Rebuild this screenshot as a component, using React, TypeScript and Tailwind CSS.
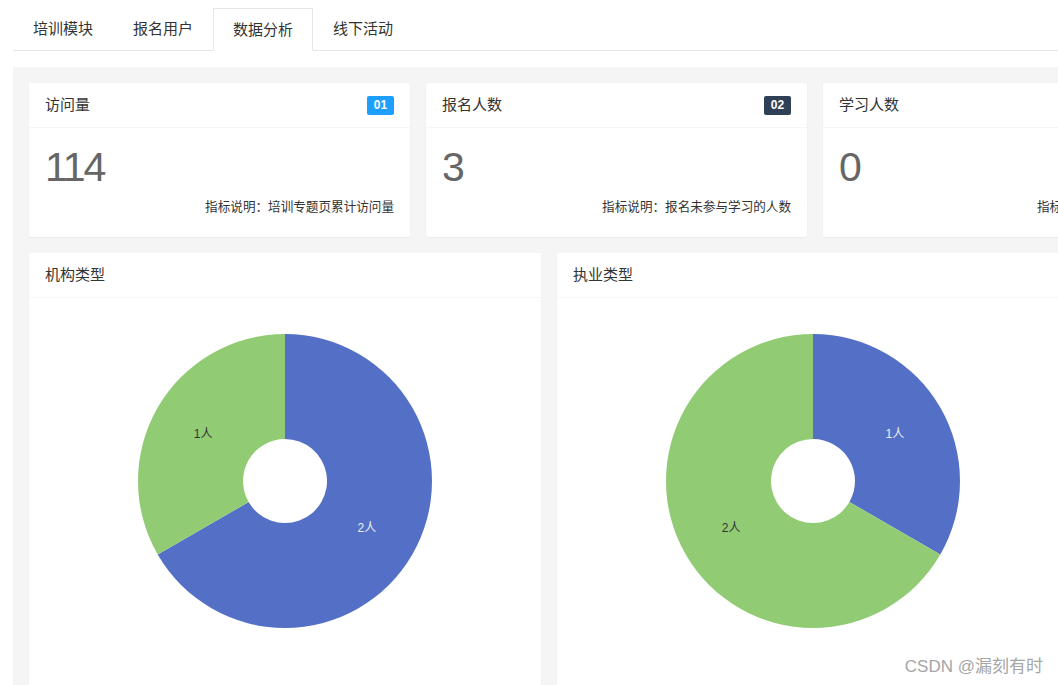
import React from 'react'

interface Slice {
    value: number
    color: string
    labelColor: string
}

interface StatCardProps {
    title: string
    badge: string
    badgeClass: string
    value: string
    note: string
}

const tabs = ['培训模块', '报名用户', '数据分析', '线下活动']

const stats: StatCardProps[] = [
    {
        title: '访问量',
        badge: '01',
        badgeClass: 'bg-[#1e9fff]',
        value: '114',
        note: '指标说明：培训专题页累计访问量',
    },
    {
        title: '报名人数',
        badge: '02',
        badgeClass: 'bg-[#2f4056]',
        value: '3',
        note: '指标说明：报名未参与学习的人数',
    },
    {
        title: '学习人数',
        badge: '03',
        badgeClass: 'bg-[#009688]',
        value: '0',
        note: '指标说明：参与学习的人数',
    },
    {
        title: '完成人数',
        badge: '04',
        badgeClass: 'bg-[#ffb800]',
        value: '0',
        note: '指标说明：完成全部课程的人数',
    },
]

const BLUE = '#5470c6'
const GREEN = '#91cc75'

// point on circle, angle measured clockwise from 12 o'clock
const pt = (cx: number, cy: number, r: number, deg: number) => {
    const a = (deg * Math.PI) / 180
    return [cx + r * Math.sin(a), cy - r * Math.cos(a)]
}

const Donut: React.FC<{ data: Slice[] }> = ({ data }) => {
    const cx = 256
    const cy = 183
    const R = 147
    const r0 = 42
    const total = data.reduce((s, d) => s + d.value, 0)

    let start = 0
    const parts = data.map((d, i) => {
        const sweep = (d.value / total) * 360
        const end = start + sweep
        const large = sweep > 180 ? 1 : 0
        const [ox1, oy1] = pt(cx, cy, R, start)
        const [ox2, oy2] = pt(cx, cy, R, end)
        const [ix1, iy1] = pt(cx, cy, r0, start)
        const [ix2, iy2] = pt(cx, cy, r0, end)
        const path = `M${ox1} ${oy1} A${R} ${R} 0 ${large} 1 ${ox2} ${oy2} L${ix2} ${iy2} A${r0} ${r0} 0 ${large} 0 ${ix1} ${iy1} Z`
        const [lx, ly] = pt(cx, cy, (R + r0) / 2, start + sweep / 2)
        start = end
        return (
            <g key={i}>
                <path d={path} fill={d.color} />
                <text
                    x={lx}
                    y={ly}
                    fill={d.labelColor}
                    fontSize="12"
                    textAnchor="middle"
                    dominantBaseline="central"
                    fontFamily="'Liberation Sans', 'Noto Sans CJK SC', sans-serif"
                >
                    {d.value}人
                </text>
            </g>
        )
    })

    return (
        <svg width="512" height="400" viewBox="0 0 512 400">
            {parts}
        </svg>
    )
}

const StatCard: React.FC<StatCardProps> = ({ title, badge, badgeClass, value, note }) => (
    <div className="w-[381px] shrink-0 bg-white rounded-[2px] shadow-[0_1px_2px_0_rgba(0,0,0,0.05)]">
        <div className="h-[45px] px-4 flex items-center justify-between border-b border-[#f6f6f6]">
            <span className="text-[15px] text-[#333]">{title}</span>
            <span
                className={`${badgeClass} h-[19px] px-[5px] min-w-[27px] text-center rounded-[2px] text-white text-[12px] font-bold leading-[19px]`}
            >
                {badge}
            </span>
        </div>
        <div className="px-4 pt-[18px] pb-[21px]">
            <div className="text-[41px] leading-[42px] tracking-[-2px] text-[#666]">{value}</div>
            <div className="mt-[10px] text-right text-[12.6px] leading-[18px] text-[#333] whitespace-nowrap">
                {note}
            </div>
        </div>
    </div>
)

const ChartCard: React.FC<{ title: string; data: Slice[] }> = ({ title, data }) => (
    <div className="w-[512px] shrink-0 bg-white rounded-[2px] shadow-[0_1px_2px_0_rgba(0,0,0,0.05)]">
        <div className="h-[45px] px-4 flex items-center border-b border-[#f6f6f6]">
            <span className="text-[15px] text-[#333]">{title}</span>
        </div>
        <Donut data={data} />
    </div>
)

export default function App() {
    return (
        <div
            className="relative w-[1058px] h-[685px] overflow-hidden bg-white pl-[13px] pt-[8px]"
            style={{ fontFamily: "'Liberation Sans', 'Noto Sans CJK SC', sans-serif" }}
        >
            {/* Tabs */}
            <ul className="flex items-start h-[43px] border-b border-[#e6e6e6]">
                {tabs.map((t, i) => (
                    <li
                        key={t}
                        className={
                            i === 2
                                ? 'relative w-[100px] h-[43px] border border-[#e6e6e6] border-b-white bg-white text-center text-[15px] leading-[41px] text-[#333]'
                                : 'w-[100px] h-[42px] text-center text-[15px] leading-[42px] text-[#333]'
                        }
                    >
                        {t}
                    </li>
                ))}
            </ul>

            {/* Panel */}
            <div className="mt-4 bg-[#f5f5f5] p-4 h-[700px]">
                <div className="flex gap-4">
                    {stats.map((s) => (
                        <StatCard key={s.title} {...s} />
                    ))}
                </div>
                <div className="flex gap-4 mt-4">
                    <ChartCard
                        title="机构类型"
                        data={[
                            { value: 2, color: BLUE, labelColor: '#eeeeee' },
                            { value: 1, color: GREEN, labelColor: '#333333' },
                        ]}
                    />
                    <ChartCard
                        title="执业类型"
                        data={[
                            { value: 1, color: BLUE, labelColor: '#eeeeee' },
                            { value: 2, color: GREEN, labelColor: '#333333' },
                        ]}
                    />
                    <ChartCard
                        title="学历类型"
                        data={[
                            { value: 1, color: BLUE, labelColor: '#eeeeee' },
                            { value: 2, color: GREEN, labelColor: '#333333' },
                        ]}
                    />
                </div>
            </div>

            {/* Watermark */}
            <div className="absolute right-[15px] bottom-[8px] text-[17px] leading-[20px] text-[#a6a6a6] whitespace-nowrap">
                CSDN @漏刻有时
            </div>
        </div>
    )
}
